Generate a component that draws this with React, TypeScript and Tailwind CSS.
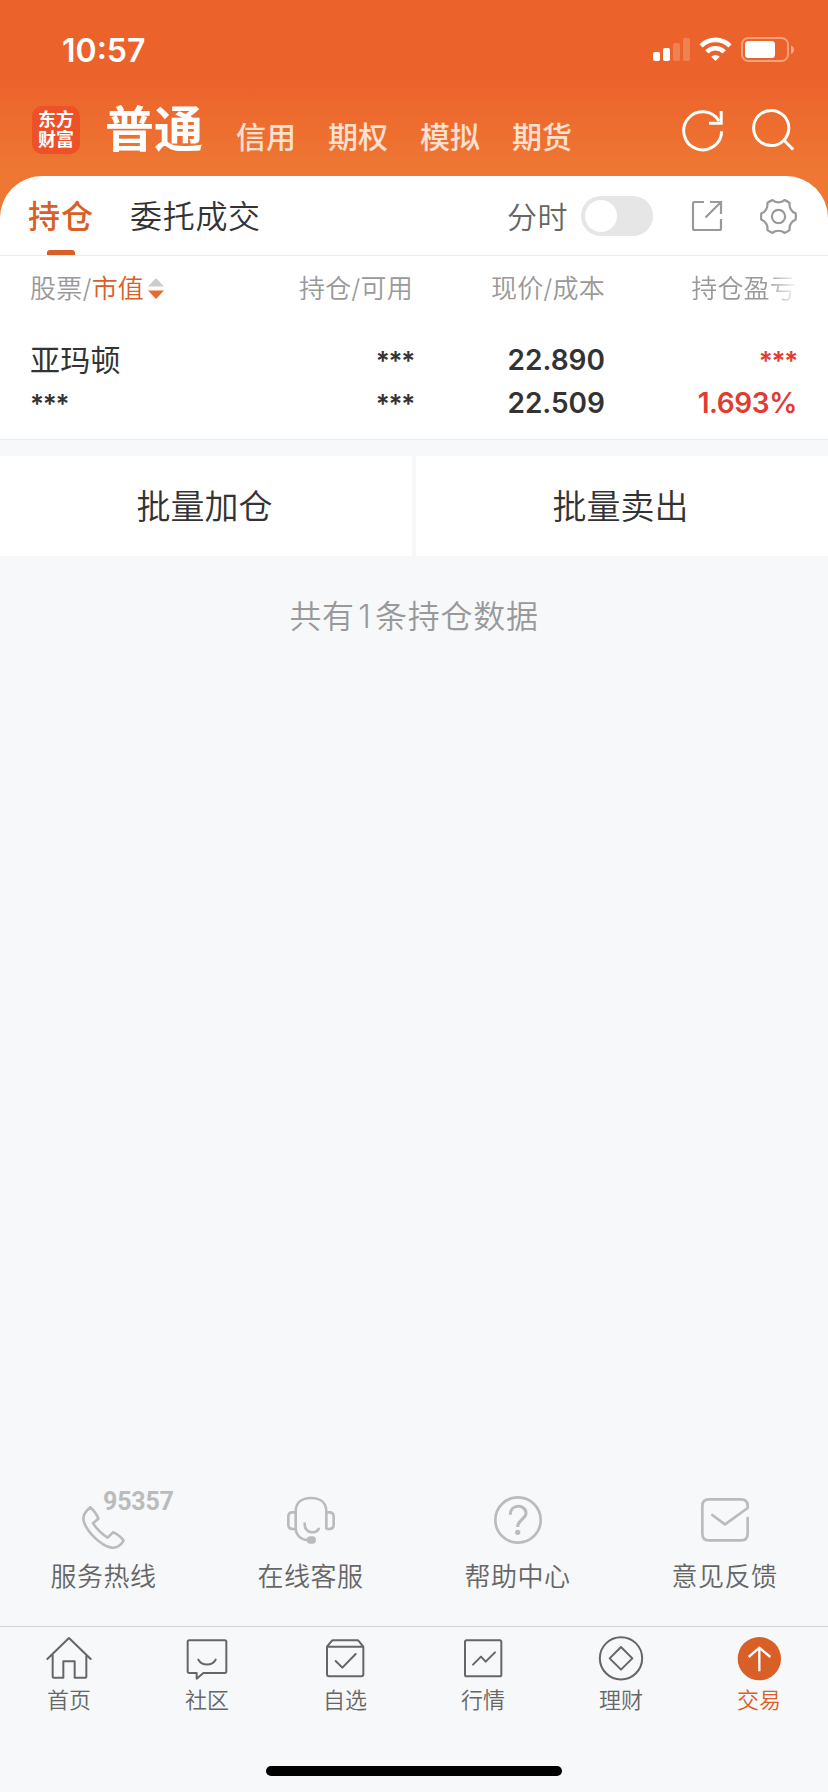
import type { ReactNode } from "react";

const MARKETS = ["信用", "期权", "模拟", "期货"];

const SERVICES = [
  { label: "服务热线", icon: <HotlineIcon /> },
  { label: "在线客服", icon: <HeadsetIcon /> },
  { label: "帮助中心", icon: <HelpIcon /> },
  { label: "意见反馈", icon: <MailIcon /> },
];

const NAV_ITEMS = [
  { label: "首页", icon: <HomeIcon /> },
  { label: "社区", icon: <CommunityIcon /> },
  { label: "自选", icon: <WatchlistIcon /> },
  { label: "行情", icon: <QuotesIcon /> },
  { label: "理财", icon: <WealthIcon /> },
  { label: "交易", icon: <TradeIcon />, active: true },
];

function StatusBar() {
  return (
    <div className="flex h-[88px] items-start justify-between pl-[62px] pr-[34px] pt-[37px]">
      <span className="text-[32px] font-semibold leading-[27px] text-white">10:57</span>
      <svg width="142" height="26" viewBox="0 0 142 26" fill="none">
        <g fill="#fff">
          <rect x="1" y="15" width="7" height="9" rx="1.8" />
          <rect x="11" y="11" width="7" height="13" rx="1.8" />
          <rect x="21" y="6" width="7" height="18" rx="1.8" opacity="0.2" />
          <rect x="31" y="1" width="7" height="23" rx="1.8" opacity="0.2" />
          <path d="M63.5 24L59.3 19.8a6 6 0 0 1 8.4 0z" />
          <rect x="93" y="4" width="30" height="17" rx="3.5" />
          <path d="M139 8.5c4 1.5 4 7 0 8.5z" opacity="0.45" />
        </g>
        <path d="M54.8 14.8a12.4 12.4 0 0 1 17.4 0M49 8.8a20.8 20.8 0 0 1 29 0" stroke="#fff" strokeWidth="4.6" />
        <rect x="90" y="1" width="46" height="23" rx="6.5" stroke="#fff" strokeOpacity="0.4" strokeWidth="2" />
      </svg>
    </div>
  );
}

function Header() {
  return (
    <div className="flex h-[88px] items-start pl-8 pr-[33px]">
      <div className="mt-[18px] flex h-12 w-12 flex-col items-center justify-center rounded-[10px] bg-[#ee5028] text-[18px] font-bold leading-[20px] text-white">
        <span>东方</span>
        <span>财富</span>
      </div>
      <h1 className="ml-[25px] mt-[17px] text-[49px] font-bold leading-[49px] text-white">普通</h1>
      <nav className="ml-[33px] mt-[33px] flex gap-8">
        {MARKETS.map((item) => (
          <span key={item} className="text-[30px] font-medium leading-[32px] text-[#fde0cf]">
            {item}
          </span>
        ))}
      </nav>
      <div className="ml-auto mt-5 flex gap-[27px]">
        <svg width="43" height="44" viewBox="0 0 43 44" fill="none" stroke="#fff" strokeWidth="3">
          <path d="M39.700 23.200A19 19 0 1 1 37 13" />
          <path d="M39.200 3v12.300H27" />
        </svg>
        <svg width="43" height="44" viewBox="0 0 43 44" fill="none" stroke="#fff" strokeWidth="3">
          <circle cx="19.200" cy="20" r="17.600" />
          <path d="M31.500 31.800l9.700 9.700" />
        </svg>
      </div>
    </div>
  );
}

function TabRow() {
  return (
    <div className="flex h-20 items-start border-b border-[#ebebeb] pl-7 pr-[31px]">
      <div className="relative h-[79px] pt-6 text-[32px] font-medium leading-[34px] tracking-[1px] text-[#d95f27]">
        持仓
        <i className="absolute bottom-0 left-[19px] h-[5px] w-7 rounded-t-[3px] bg-[#d95f27]" />
      </div>
      <div className="ml-9 pt-6 text-[32px] leading-[34px] tracking-[0.7px] text-[#333]">委托成交</div>
      <div className="ml-auto pt-6 text-[30px] leading-[34px] tracking-[0.5px] text-[#666]">分时</div>
      <div className="ml-[13px] mt-5 flex h-10 w-[72px] items-center rounded-full bg-[#e6e6e6] px-1">
        <i className="h-8 w-8 rounded-full bg-white" />
      </div>
      <svg className="ml-[38px] mt-6" width="32" height="32" viewBox="0 0 32 32" fill="none" stroke="#999" strokeWidth="2.2">
        <path d="M13 2H3.5A1.5 1.5 0 0 0 2 3.5v25A1.5 1.5 0 0 0 3.5 30h25a1.5 1.5 0 0 0 1.5-1.5V19M19 2h11v12M30 2L14.5 17.5" />
      </svg>
      <svg className="ml-[37px] mt-[22px]" width="37" height="37" viewBox="-18.5 -18.5 37 37" fill="none" stroke="#999" strokeWidth="2.2">
        <circle r="6.6" />
        <path
          d="M17.200-3.100Q17.600 0 17.200 3.100C13.100 4.300 10.300 9.200 11.200 13.500Q9 15.400 6 16.400C2.900 13.500-2.900 13.500-6 16.400Q-9 15.400-11.200 13.500C-10.300 9.200-13.100 4.300-17.200 3.100Q-17.600 0-17.200-3.100C-13.100-4.300-10.300-9.200-11.200-13.500Q-9-15.400-6-16.400C-2.900-13.500 2.900-13.500 6-16.400Q9-15.400 11.200-13.500C10.300-9.200 13.100-4.300 17.200-3.100Z"
          strokeLinejoin="round"
        />
      </svg>
    </div>
  );
}

function Masked() {
  return <span className="text-[26px] tracking-[-1.3px]">***</span>;
}

function Holdings() {
  return (
    <section className="h-[184px] border-b border-[#ebebeb] bg-white pl-[30px] pt-[19px]">
      <div className="grid grid-cols-[192px_191px_192px_191px] text-right text-[26px] leading-[28px] tracking-[0.2px] text-[#999]">
        <div className="flex items-center">
          股票/<span className="text-[#d95f27]">市值</span>
          <svg className="ml-1" width="16" height="22" viewBox="0 0 16 22">
            <path d="M8 0l8 8.5H0z" fill="#ccc" />
            <path d="M0 12.5h16L8 21z" fill="#e8692f" />
          </svg>
        </div>
        <div>持仓/可用</div>
        <div>现价/成本</div>
        <div className="[mask-image:linear-gradient(to_right,#000_160px,transparent_194px)]">持仓盈亏</div>
      </div>
      <div className="mt-9 grid grid-cols-[192px_192px_191px_192px] text-right text-[28px] font-semibold leading-[43px] text-[#333]">
        <span className="text-left text-[30px] font-normal tracking-[0.2px]">亚玛顿</span>
        <Masked />
        <span>22.890</span>
        <span className="text-[#e03c32]">
          <Masked />
        </span>
        <span className="text-left">
          <Masked />
        </span>
        <Masked />
        <span>22.509</span>
        <span className="tracking-[-0.400px] text-[#e03c32]">1.693%</span>
      </div>
    </section>
  );
}

function Cell({ children, icon }: { children: ReactNode; icon: ReactNode }) {
  return (
    <div className="flex flex-1 flex-col items-center">
      {icon}
      {children}
    </div>
  );
}

function HotlineIcon() {
  return (
    <div className="relative h-[60px] w-[43px]">
      <svg className="mt-4" width="44" height="44" viewBox="249 105 132 132" fill="none" stroke="#bbb" strokeWidth="8" strokeLinejoin="round">
        <path d="M274 109C260 120 250 134 254 150C262 180 304 224 338 230C354 232 366 222 374 209Q360 191 342 184L326 200Q300 184 282 157L298 143Q292 126 274 109Z" />
      </svg>
      <span className="absolute left-[21px] top-[1px] font-['Roboto'] text-[25px] font-bold leading-[22px] tracking-[-0.200px] text-[#bbb]">95357</span>
    </div>
  );
}

function HeadsetIcon() {
  return (
    <svg width="50" height="60" viewBox="858 60 150 180" fill="none" stroke="#bbb" strokeWidth="8">
      <path d="M887 178V125C887 98 905 84 933 84C961 84 979 98 979 125V178M887 178C890 198 905 210 925 210M887 127H877Q865 127 865 140V163Q865 177 877 177H887M979 127H989Q1001 127 1001 140V163Q1001 177 989 177H979" />
      <path d="M914 161C914 192 948 192 956 177" strokeLinecap="round" />
      <rect x="924" y="203" width="20" height="14" rx="7" fill="#bbb" />
    </svg>
  );
}

function HelpIcon() {
  return (
    <svg width="50" height="60" viewBox="237 60 150 180" fill="none" stroke="#bbb" strokeWidth="8">
      <circle cx="312" cy="150" r="68" />
      <path d="M289 134C289 100 336 102 336 130C336 148 311 148 311 171" strokeWidth="9" />
      <circle cx="311" cy="187" r="8" fill="#bbb" stroke="none" />
    </svg>
  );
}

function MailIcon() {
  return (
    <svg width="50" height="60" viewBox="858 60 150 180" fill="none" stroke="#bbb" strokeWidth="8" strokeLinecap="round" strokeLinejoin="round">
      <path d="M895 135L933 163L1001 114V108Q1001 88 981 88H885Q865 88 865 108V191Q865 211 885 211H981Q1001 211 1001 191V144" />
    </svg>
  );
}

function NavSvg({ children }: { children: ReactNode }) {
  return (
    <svg width="46" height="46" viewBox="0 0 138 138" fill="none" stroke="#666" strokeWidth="6" strokeLinecap="round" strokeLinejoin="round">
      {children}
    </svg>
  );
}

function HomeIcon() {
  return (
    <NavSvg>
      <path d="M4 72L69 9L134 72M20 60V125Q20 128 23 128H52V79H86V128H118Q121 128 121 125V60" />
    </NavSvg>
  );
}

function CommunityIcon() {
  return (
    <NavSvg>
      <path d="M16 16H122Q127 16 127 21V109Q127 114 122 114H58L38 131V114H16Q11 114 11 109V21Q11 16 16 16ZM43 74C54 93 84 93 95 74" />
    </NavSvg>
  );
}

function WatchlistIcon() {
  return (
    <NavSvg>
      <path d="M15 35L28 19Q30 16 34 16H105Q109 16 111 19L124 35M15 35H124V118Q124 124 118 124H21Q15 124 15 118ZM41 78L61 98L101 57" />
    </NavSvg>
  );
}

function QuotesIcon() {
  return (
    <NavSvg>
      <rect x="15" y="16" width="109" height="108" rx="5" />
      <path d="M39 89L63 65L77 80L105 52" />
    </NavSvg>
  );
}

function WealthIcon() {
  return (
    <NavSvg>
      <circle cx="69" cy="70" r="63.5" />
      <path d="M69 36L103 70L69 104L35 70Z" />
    </NavSvg>
  );
}

function TradeIcon() {
  return (
    <NavSvg>
      <circle cx="70" cy="71" r="65" fill="#d95f27" stroke="none" />
      <path d="M70 109V40M38 66L70 38L103 66" stroke="#fff" strokeWidth="7" strokeLinecap="butt" strokeLinejoin="miter" />
    </NavSvg>
  );
}

export default function App() {
  return (
    <div className="flex h-[1792px] w-[828px] flex-col overflow-hidden bg-[#f7f8fa] font-['Inter','Noto_Sans_CJK_SC',sans-serif] font-[350]">
      <header className="h-[220px] shrink-0 bg-[linear-gradient(to_bottom,#ec622b_0px,#ec622b_75px,#ee7733_170px,#ee7733_220px)]">
        <StatusBar />
        <Header />
      </header>
      <div className="relative -mt-11 shrink-0 rounded-t-[42px] bg-white">
        <TabRow />
        <Holdings />
      </div>
      <div className="mt-4 grid h-[100px] shrink-0 grid-cols-2 gap-1 text-[34px] text-[#333]">
        <button className="bg-white pr-[3px]">批量加仓</button>
        <button className="bg-white pr-[3px]">批量卖出</button>
      </div>
      <p className="mt-11 text-center text-[32px] leading-[34px] tracking-[0.7px] text-[#999]">
        共有<span className="mx-[3.5px]">1</span>条持仓数据
      </p>

      <div className="mt-auto flex h-[136px] shrink-0">
        {SERVICES.map((item) => (
          <Cell key={item.label} icon={item.icon}>
            <span className="mt-[13px] text-[26px] leading-[28px] tracking-[0.5px] text-[#666]">{item.label}</span>
          </Cell>
        ))}
      </div>
      <nav className="flex h-[140px] shrink-0 border-t border-[#d5d5d9] pt-2">
        {NAV_ITEMS.map((item) => (
          <Cell key={item.label} icon={item.icon}>
            <span className={item.active ? "mt-[7px] text-[22px] leading-[24px] text-[#d95f27]" : "mt-[7px] text-[22px] leading-[24px] text-[#666]"}>
              {item.label}
            </span>
          </Cell>
        ))}
      </nav>
      <div className="mx-auto mb-4 h-[10px] w-[296px] shrink-0 rounded-full bg-black" />
    </div>
  );
}
